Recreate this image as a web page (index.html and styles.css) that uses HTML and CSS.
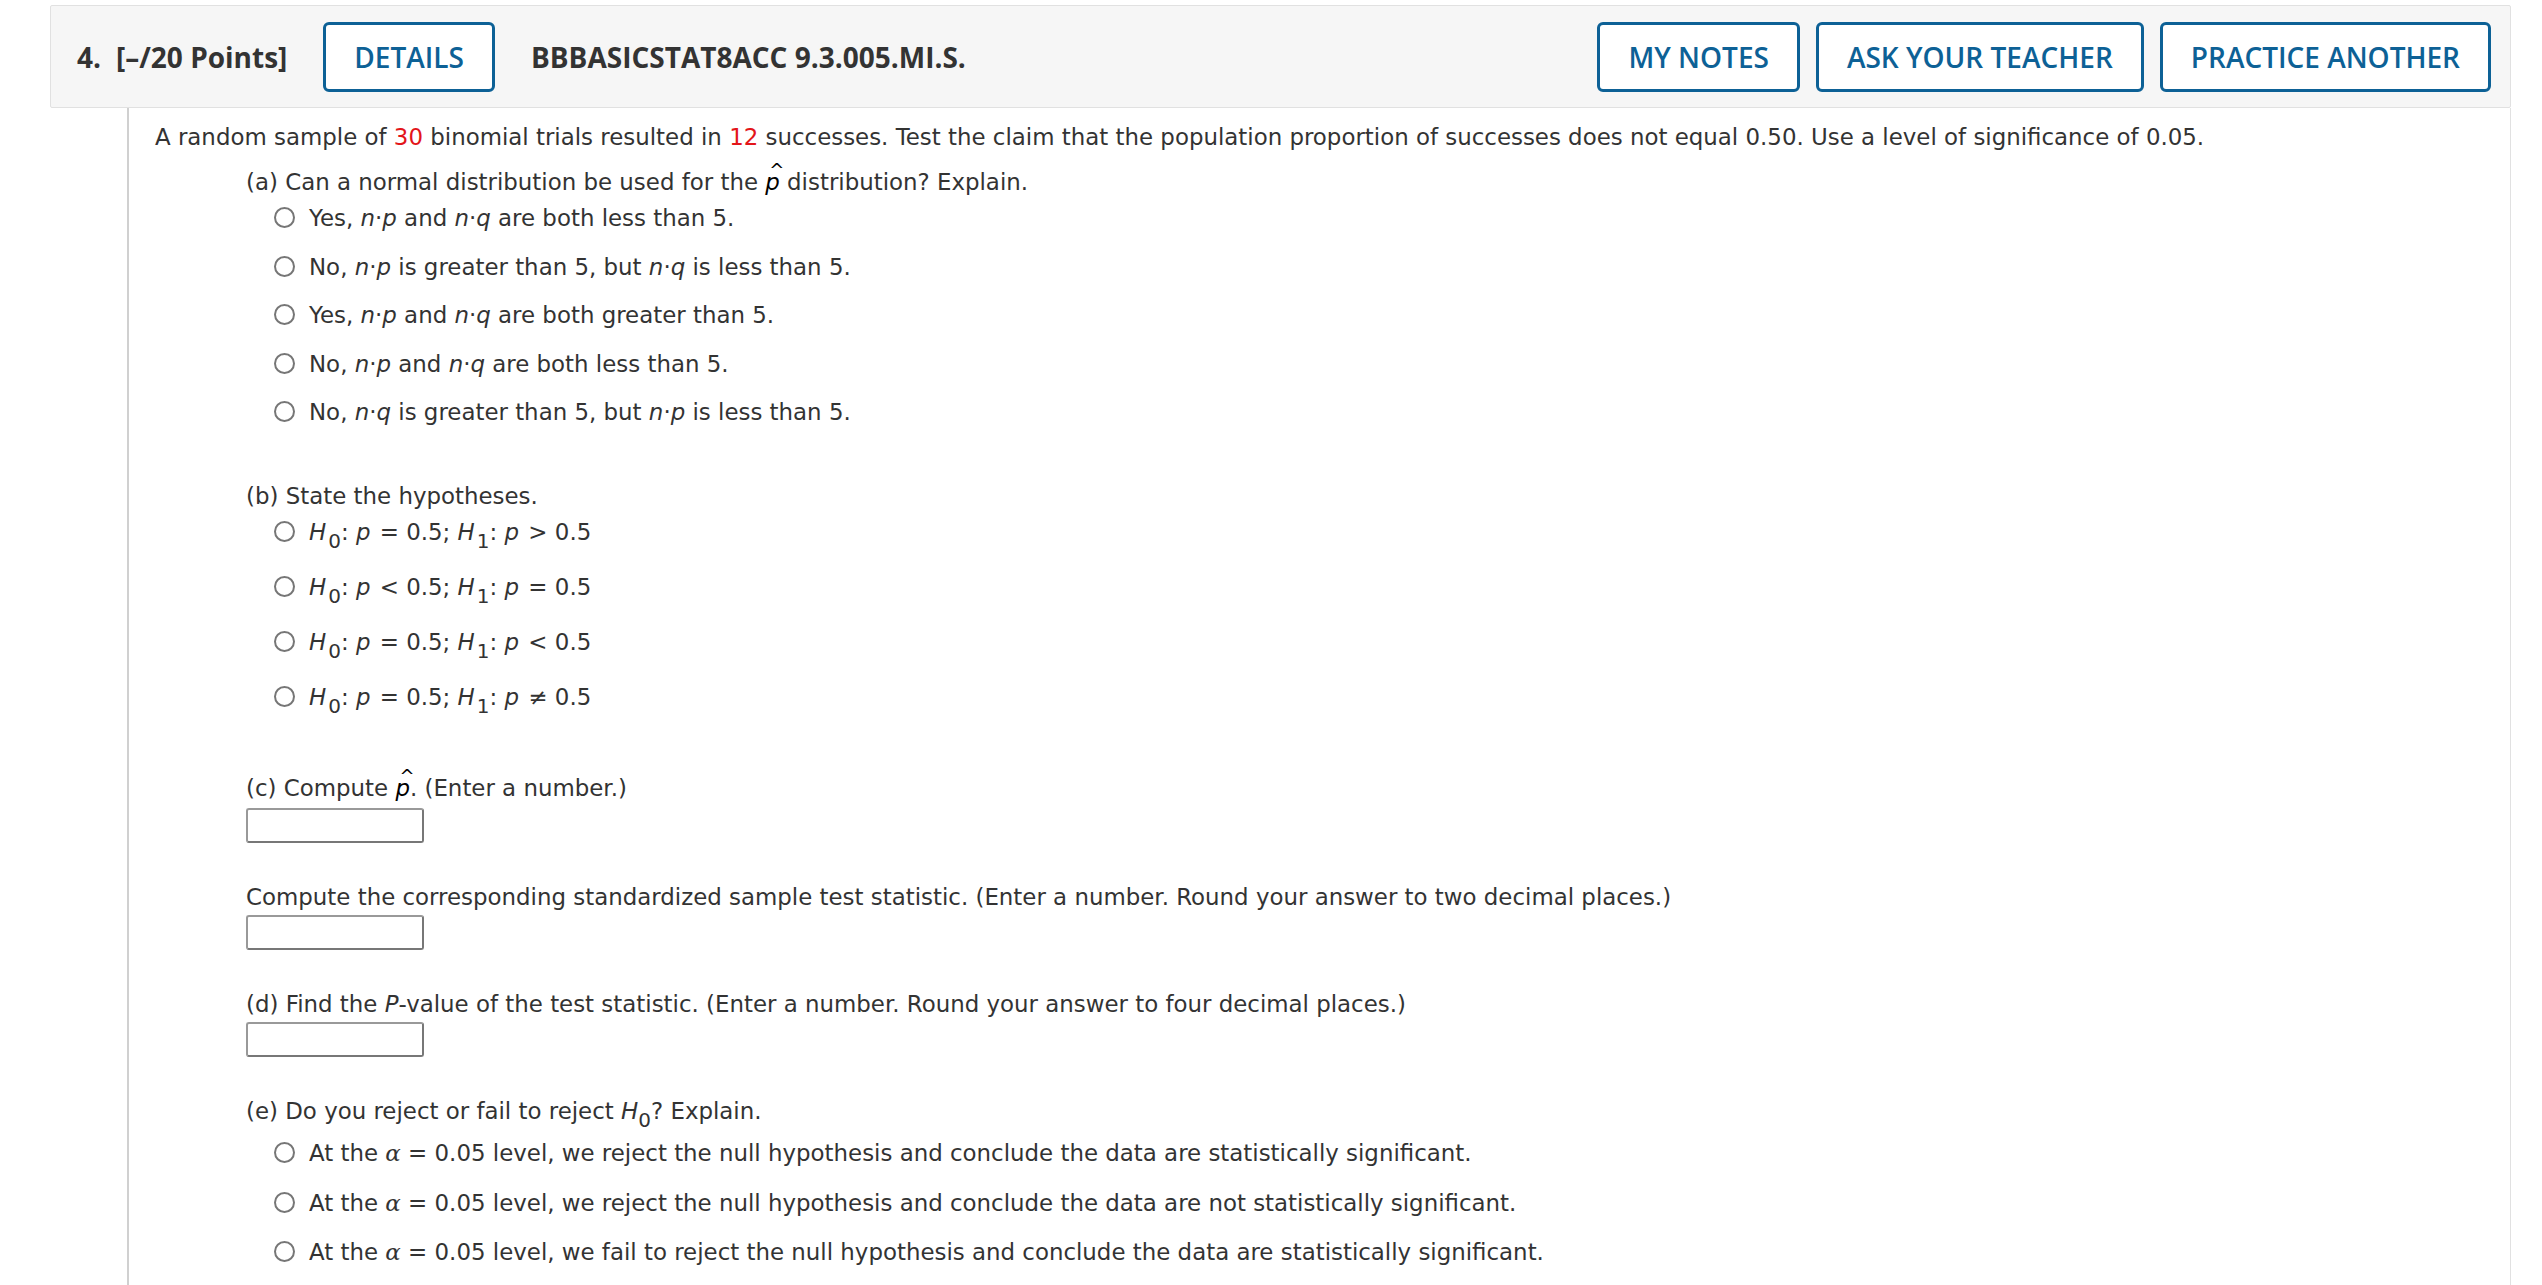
FILE: index.html
```html
<!DOCTYPE html>
<html>
<head>
    <meta http-equiv="Content-Type" content="text/html; charset=utf-8" />
    <title>WebAssign - Question 4</title>
    <link rel="stylesheet" href="styles.css">
</head>
<body>

<div class="question">

    <!-- question header -->
    <div class="q-head">
        <span class="q-num">4.</span>
        <span class="q-points">[&ndash;/20 Points]</span>
        <a class="q-btn q-btn-details" href="#">DETAILS</a>
        <span class="q-code">BBBASICSTAT8ACC 9.3.005.MI.S.</span>
        <div class="q-actions">
            <a class="q-btn" href="#">MY NOTES</a>
            <a class="q-btn" href="#">ASK YOUR TEACHER</a>
            <a class="q-btn" href="#">PRACTICE ANOTHER</a>
        </div>
    </div>

    <!-- question body -->
    <div class="q-body">
        <p class="q-intro">A random sample of <span class="red">30</span> binomial trials resulted in <span class="red">12</span> successes. Test the claim that the population proportion of successes does not equal 0.50. Use a level of significance of 0.05.</p>

        <!-- (a) -->
        <div class="part">
            <div class="part-label">(a) Can a normal distribution be used for the <span class="hat">p</span> distribution? Explain.</div>
            <ul class="opts">
                <li><span class="radio"></span>Yes, <i>n</i>&middot;<i>p</i> and <i>n</i>&middot;<i>q</i> are both less than 5.</li>
                <li><span class="radio"></span>No, <i>n</i>&middot;<i>p</i> is greater than 5, but <i>n</i>&middot;<i>q</i> is less than 5.</li>
                <li><span class="radio"></span>Yes, <i>n</i>&middot;<i>p</i> and <i>n</i>&middot;<i>q</i> are both greater than 5.</li>
                <li><span class="radio"></span>No, <i>n</i>&middot;<i>p</i> and <i>n</i>&middot;<i>q</i> are both less than 5.</li>
                <li><span class="radio"></span>No, <i>n</i>&middot;<i>q</i> is greater than 5, but <i>n</i>&middot;<i>p</i> is less than 5.</li>
            </ul>
        </div>

        <!-- (b) -->
        <div class="part part-b">
            <div class="part-label">(b) State the hypotheses.</div>
            <ul class="opts opts-hyp">
                <li><span class="radio"></span><i>H</i><sub>0</sub>: <i>p</i> = 0.5; <i>H</i><sub>1</sub>: <i>p</i> &gt; 0.5</li>
                <li><span class="radio"></span><i>H</i><sub>0</sub>: <i>p</i> &lt; 0.5; <i>H</i><sub>1</sub>: <i>p</i> = 0.5</li>
                <li><span class="radio"></span><i>H</i><sub>0</sub>: <i>p</i> = 0.5; <i>H</i><sub>1</sub>: <i>p</i> &lt; 0.5</li>
                <li><span class="radio"></span><i>H</i><sub>0</sub>: <i>p</i> = 0.5; <i>H</i><sub>1</sub>: <i>p</i> &ne; 0.5</li>
            </ul>
        </div>

        <!-- (c) -->
        <div class="part part-c">
            <div class="part-label">(c) Compute <span class="hat">p</span>. (Enter a number.)</div>
            <input class="answer" type="text" />
        </div>

        <div class="part part-input">
            <div class="part-label">Compute the corresponding standardized sample test statistic. (Enter a number. Round your answer to two decimal places.)</div>
            <input class="answer" type="text" />
        </div>

        <!-- (d) -->
        <div class="part part-input">
            <div class="part-label">(d) Find the <i>P</i>-value of the test statistic. (Enter a number. Round your answer to four decimal places.)</div>
            <input class="answer" type="text" />
        </div>

        <!-- (e) -->
        <div class="part part-input part-e">
            <div class="part-label">(e) Do you reject or fail to reject <i>H</i><sub>0</sub>? Explain.</div>
            <ul class="opts opts-e">
                <li><span class="radio"></span>At the <i class="greek">&alpha;</i> = 0.05 level, we reject the null hypothesis and conclude the data are statistically significant.</li>
                <li><span class="radio"></span>At the <i class="greek">&alpha;</i> = 0.05 level, we reject the null hypothesis and conclude the data are not statistically significant.</li>
                <li><span class="radio"></span>At the <i class="greek">&alpha;</i> = 0.05 level, we fail to reject the null hypothesis and conclude the data are statistically significant.</li>
            </ul>
        </div>
    </div>
</div>

</body>
</html>
```

FILE: styles.css
```css
body{
    margin: 0px;padding: 0px;background: #fff;
    font-family: "DejaVu Sans", Verdana, sans-serif;
    font-size: 22.9px;color: #333;
}

/*question block*/
.question{
    margin: 5px 31px 0px 50px;
}

/*header bar*/
.q-head{
    height: 101px;
    display: flex;align-items: center;
    padding: 0px 19px 0px 26px;
    background: #f6f6f6;
    border: 1px solid #e1e1e1;border-radius: 2px;
    font-family: "Open Sans", sans-serif;font-size: 28px;
}
.q-num{font-weight: 700;color: #333;margin-right: 15px;}
.q-points{font-weight: 700;color: #333;margin-right: 36px;}
.q-code{font-weight: 700;color: #333;margin-left: 36px;}

.q-btn{
    display: flex;align-items: center;
    height: 64px;padding: 0px 28px;
    border: 3px solid #0d6196;border-radius: 6px;
    background: #fff;
    color: #0d6196;text-decoration: none;font-weight: 600;
}
.q-actions{
    margin-left: auto;
    display: flex;gap: 16px;
}

/*body*/
.q-body{
    margin-left: 77px;
    padding: 13px 26px 40px 26px;
    border-left: 2px solid #d0d0d0;
    border-right: 1px solid #e1e1e1;
    line-height: 32px;
}
.q-intro{margin: 0px;}
.red{color: #e3151a;}

.part{margin: 13px 0px 0px 91px;}
.part-b{margin-top: 52px;}
.part-c{margin-top: 59px;}
.part-input{margin-top: 38px;}

.part-label{height: 32px;white-space: nowrap;}

.opts{
    list-style: none;
    margin: 4px 0px 0px 0px;padding: 0px 0px 0px 28px;
}
.opts li{
    height: 32px;margin-bottom: 16.6px;
    white-space: nowrap;
}
.opts-hyp li{margin-bottom: 23px;}
.opts-hyp i{margin-right: 2px;}
.opts-e{margin-top: 10px;}
.opts-e li{margin-bottom: 17.5px;}

/*radio circle*/
.radio{
    display: inline-block;
    width: 17px;height: 17px;
    border: 2px solid #767676;border-radius: 50%;
    margin-right: 14px;
    vertical-align: -2px;
}

i{font-style: italic;}
.greek{font-family: "DejaVu Serif", "Liberation Serif", serif;}

sub{
    font-size: 20px;
    vertical-align: baseline;
    position: relative;top: 8px;
    line-height: 0;
}

/*p with a hat*/
.hat{
    font-style: italic;color: #000;
    position: relative;display: inline-block;
}
.hat:before{
    content: "^";
    position: absolute;left: 4px;top: -12px;
    font-style: normal;font-size: 18px;
}

.answer{
    display: block;
    width: 174px;height: 31px;
    margin: 4px 0px 0px 0px;padding: 0px;
    border: 2px solid #777;border-radius: 3px;
    border-top-color: #999;border-left-color: #999;
    outline: none;
}
.part-input .answer{margin-top: 2px;}
```
